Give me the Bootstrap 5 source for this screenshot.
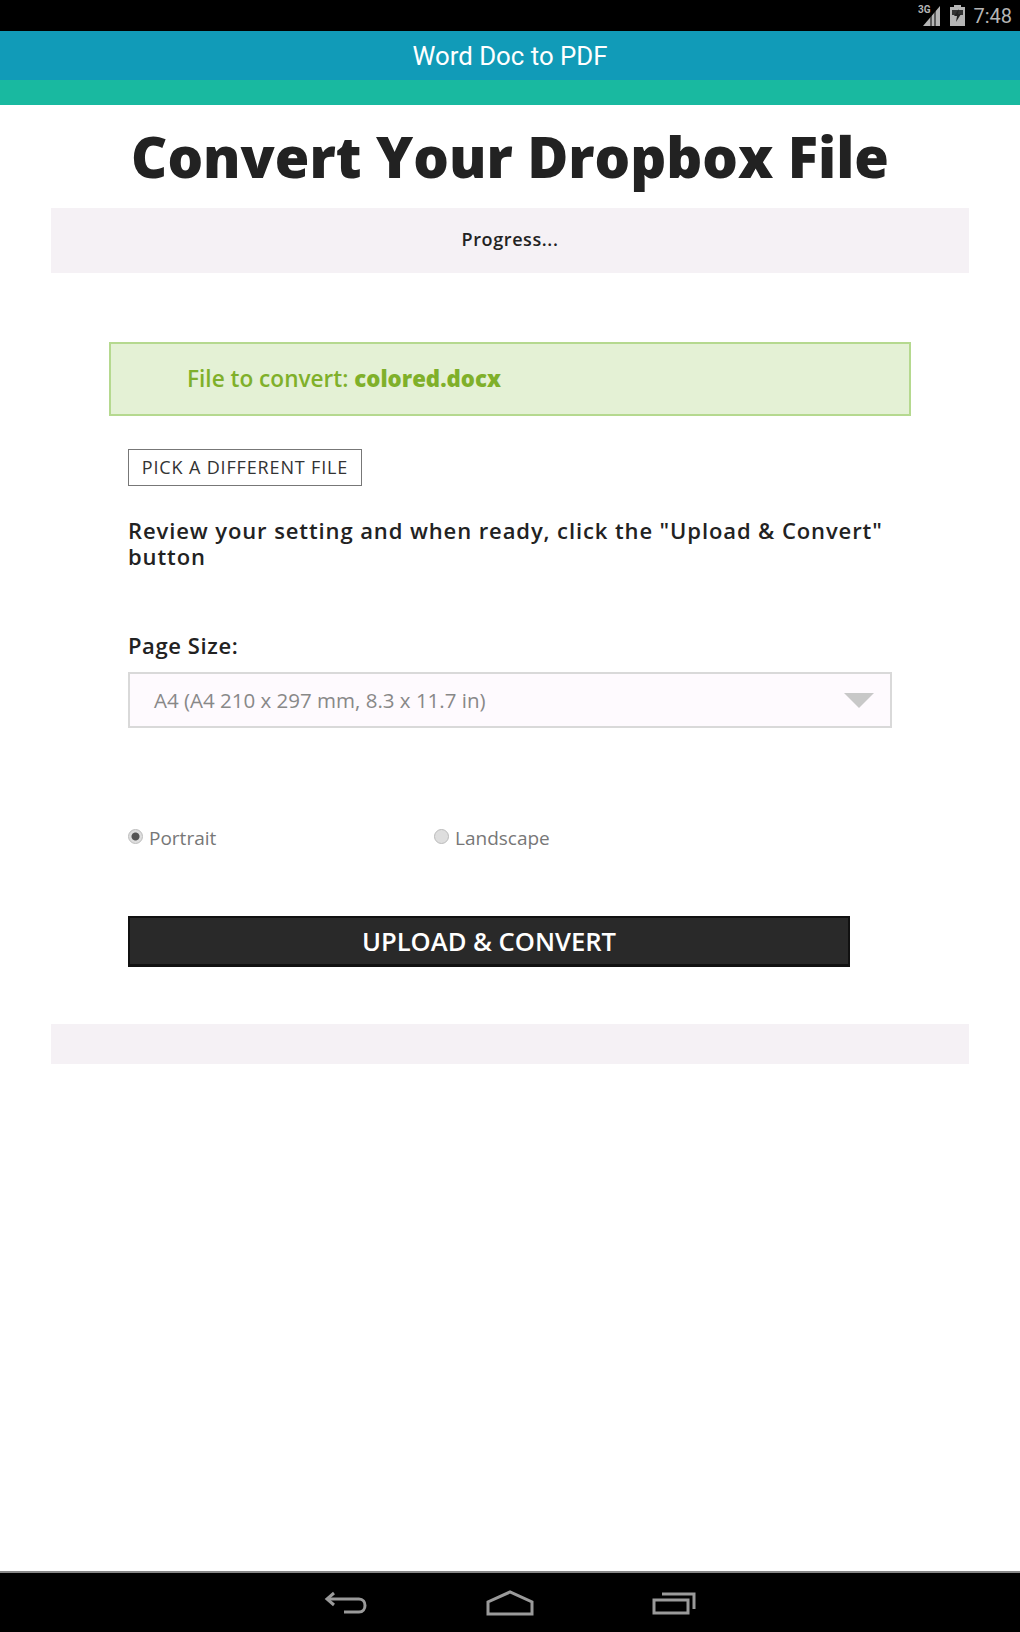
<!DOCTYPE html>
<html lang="en">
<head>
  <meta charset="UTF-8" />
  <title>Word Doc to PDF</title>
  <link href="https://cdn.jsdelivr.net/npm/bootstrap@5.3.0/dist/css/bootstrap.min.css" rel="stylesheet" />
  <style>
    body {
      font-family: "Open Sans", sans-serif;
      background: #fff;
      color: #222;
    }
    .tela {
      height: 1632px;
    }
    .barra-status {
      height: 31px;
      background: #000;
      color: #b5b5b5;
      font-family: Roboto, sans-serif;
      font-size: 20px;
      padding-right: 8px;
    }
    .barra-titulo {
      height: 49px;
      padding-top: 2px;
      background: #119bb8;
      color: #fff;
      font-family: Roboto, sans-serif;
      font-size: 25.8px;
    }
    .faixa-verde {
      height: 25px;
      background: #19b9a0;
    }
    .conteudo {
      padding: 0 51px;
    }
    .titulo-pagina {
      font-size: 56px;
      font-weight: 800;
      line-height: 103px;
      margin: 0;
      color: #222;
    }
    .painel-progresso {
      height: 65px;
      padding-bottom: 2px;
      background: #f5f1f5;
      font-size: 18px;
      font-weight: 600;
      letter-spacing: .6px;
      color: #222;
    }
    .painel-vazio {
      height: 40px;
      background: #f5f1f5;
      margin-top: 57px;
    }
    .area-form {
      padding: 69px 58px 0;
    }
    .aviso-arquivo {
      height: 74px;
      padding-left: 76px;
      background: #e4f1d5;
      border: 2px solid #b5d98f;
      color: #7fb02a;
      font-size: 22.6px;
      font-weight: 600;
    }
    .aviso-arquivo strong {
      font-size: 22.2px;
    }
    .bloco-form {
      padding: 33px 19px 0;
    }
    .btn-trocar {
      width: 234px;
      height: 37px;
      padding: 0;
      border: 1px solid #777;
      border-radius: 0;
      background: #fff;
      color: #333;
      font-size: 18px;
      letter-spacing: .85px;
    }
    .texto-revisao {
      margin: 31px 0 0;
      font-size: 22px;
      font-weight: 600;
      letter-spacing: .9px;
      line-height: 26px;
      color: #222;
    }
    .rotulo-pagina {
      margin: 62px 0 0;
      font-size: 22px;
      font-weight: 600;
      letter-spacing: .6px;
      line-height: 28px;
      color: #222;
    }
    .caixa-select {
      width: 764px;
      height: 56px;
      margin-top: 13px;
      padding: 0 16px 0 24px;
      background: #fefafe;
      border: 2px solid #d9d9d9;
      color: #888;
      font-size: 20.5px;
    }
    .seta-select {
      width: 0;
      height: 0;
      border-left: 15px solid transparent;
      border-right: 15px solid transparent;
      border-top: 15px solid #c8c8c8;
    }
    .linha-radios {
      margin-top: 96px;
      color: #777;
      font-size: 19px;
      line-height: 28px;
    }
    .opcao-radio {
      width: 306px;
      gap: 6px;
    }
    .radio-falso {
      width: 15px;
      height: 15px;
      margin-top: -3px;
      border-radius: 50%;
      background: #dedede;
      border: 1px solid #bbb;
    }
    .radio-falso.marcado {
      background: radial-gradient(circle, #555 0 3.5px, #dedede 4.5px);
    }
    .btn-enviar {
      width: 722px;
      height: 51px;
      margin-top: 64px;
      padding: 3px 0 0;
      background: #292929;
      border: 2px solid #111;
      border-bottom-width: 3px;
      border-radius: 0;
      color: #fff;
      font-size: 25.6px;
      font-weight: 600;
    }
    .btn-enviar:hover {
      background: #292929;
      color: #fff;
    }
    .barra-nav {
      height: 61px;
      background: #000;
      border-top: 2px solid #888;
      gap: 118px;
    }
  </style>
</head>
<body>
<div class="tela d-flex flex-column">
  <div class="barra-status d-flex justify-content-end align-items-center flex-shrink-0">
    <svg width="24" height="24" viewBox="0 0 24 24">
      <path d="M22 2v20H5z" fill="#b5b5b5" />
      <path d="M17 7v15M13 11v11" stroke="#000" stroke-width="1" />
      <text x="0" y="9" font-size="10" font-weight="700" fill="#b5b5b5" font-family="Roboto, sans-serif">3G</text>
    </svg>
    <svg class="ms-2 me-2" width="15" height="21" viewBox="0 0 15 21">
      <path d="M4 0h7v2h4v19H0V2h4z" fill="#b5b5b5" />
      <path d="M2 5h11v5H2z" fill="#333" />
      <path d="M9 4L4 11h3l-1 6 5-8H8z" fill="#222" />
    </svg>
    <span>7:48</span>
  </div>
  <div class="barra-titulo d-flex justify-content-center align-items-center flex-shrink-0">Word Doc to PDF</div>
  <div class="faixa-verde flex-shrink-0"></div>

  <div class="conteudo flex-grow-1">
    <h1 class="titulo-pagina text-center">Convert Your Dropbox File</h1>
    <div class="painel-progresso d-flex justify-content-center align-items-center">Progress...</div>

    <div class="area-form">
      <div class="aviso-arquivo d-flex align-items-center">
        <span>File to convert: <strong>colored.docx</strong></span>
      </div>

      <div class="bloco-form">
        <button type="button" class="btn btn-trocar d-block">PICK A DIFFERENT FILE</button>
        <p class="texto-revisao">Review your setting and when ready, click the "Upload &amp; Convert" button</p>
        <p class="rotulo-pagina">Page Size:</p>
        <div class="caixa-select d-flex justify-content-between align-items-center">
          <span>A4 (A4 210 x 297 mm, 8.3 x 11.7 in)</span>
          <span class="seta-select"></span>
        </div>
        <div class="linha-radios d-flex">
          <div class="opcao-radio d-flex align-items-center"><span class="radio-falso marcado"></span><span>Portrait</span></div>
          <div class="opcao-radio d-flex align-items-center"><span class="radio-falso"></span><span>Landscape</span></div>
        </div>
        <button type="button" class="btn btn-enviar d-block">UPLOAD &amp; CONVERT</button>
      </div>
    </div>

    <div class="painel-vazio"></div>
  </div>

  <div class="barra-nav d-flex justify-content-center align-items-center flex-shrink-0">
    <svg width="44" height="26" viewBox="0 0 44 26" fill="none" stroke="#9a9a9a" stroke-width="3">
      <path d="M10 3L3 9l7 6" />
      <path d="M3 9h32c8 0 8 13 0 13H20" />
    </svg>
    <svg width="48" height="26" viewBox="0 0 48 26" fill="none" stroke="#9a9a9a" stroke-width="3">
      <path d="M2 24V12L24 2l22 10v12z" />
    </svg>
    <svg width="44" height="24" viewBox="0 0 44 24" fill="none" stroke="#9a9a9a" stroke-width="3">
      <rect x="2" y="9" width="34" height="13" />
      <path d="M10 3h32v15" />
    </svg>
  </div>
</div>
<script src="https://cdn.jsdelivr.net/npm/bootstrap@5.3.0/dist/js/bootstrap.bundle.min.js"></script>
</body>
</html>
